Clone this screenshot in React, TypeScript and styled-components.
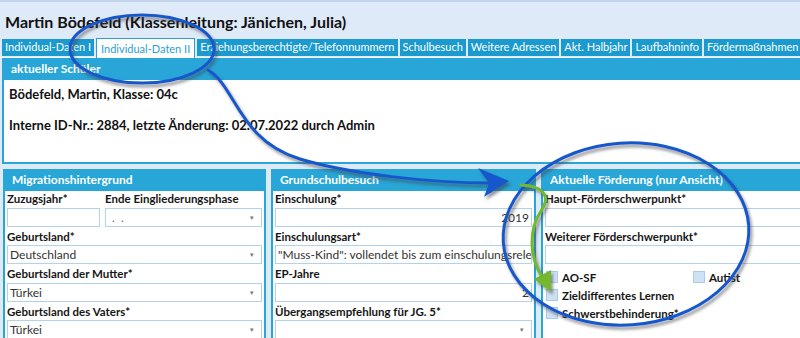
import styled, { createGlobalStyle } from "styled-components";

const FONT = `"Segoe UI", Lato, "Open Sans", sans-serif`;

const GlobalStyle = createGlobalStyle`
  html, body {
    margin: 0;
    padding: 0;
    overflow: hidden;
    background: #dfeaf8;
  }
  * {
    box-sizing: border-box;
  }
`;

const tabs = [
  "Individual-Daten I",
  "Individual-Daten II",
  "Erziehungsberechtigte/Telefonnummern",
  "Schulbesuch",
  "Weitere Adressen",
  "Akt. Halbjahr",
  "Laufbahninfo",
  "Fördermaßnahmen",
  "Einwilligungen",
];

function App() {
  return (
    <Page>
      <GlobalStyle />
      <TitleBar>Martin Bödefeld (Klassenleitung: Jänichen, Julia)</TitleBar>
      <TabStrip>
        {tabs.map((t, i) => (
          <Tab key={t} $active={i === 1}>
            {t}
          </Tab>
        ))}
      </TabStrip>
      <Content>
        <StudentPanel>
          <PanelHeader>aktueller Schüler</PanelHeader>
          <StudentBody>
            <StudentLine>Bödefeld, Martin, Klasse: 04c</StudentLine>
            <StudentLine>Interne ID-Nr.: 2884, letzte Änderung: 02.07.2022 durch Admin</StudentLine>
          </StudentBody>
        </StudentPanel>

        <PanelGrid>
          <Panel>
            <PanelHeader>Migrationshintergrund</PanelHeader>
            <PanelBody>
              <FieldRow>
                <Field $width={93}>
                  <Label>Zuzugsjahr*</Label>
                  <Input />
                </Field>
                <Field $grow>
                  <Label>Ende Eingliederungsphase</Label>
                  <Select>
                    <Placeholder>.&nbsp;&nbsp;.</Placeholder>
                    <Arrow>▾</Arrow>
                  </Select>
                </Field>
              </FieldRow>
              <Field>
                <Label>Geburtsland*</Label>
                <Select>
                  Deutschland
                  <Arrow>▾</Arrow>
                </Select>
              </Field>
              <Field>
                <Label>Geburtsland der Mutter*</Label>
                <Select>
                  Türkei
                  <Arrow>▾</Arrow>
                </Select>
              </Field>
              <Field>
                <Label>Geburtsland des Vaters*</Label>
                <Select>
                  Türkei
                  <Arrow>▾</Arrow>
                </Select>
              </Field>
            </PanelBody>
          </Panel>

          <Panel>
            <PanelHeader>Grundschulbesuch</PanelHeader>
            <PanelBody>
              <Field>
                <Label>Einschulung*</Label>
                <Input $right>2019</Input>
              </Field>
              <Field>
                <Label>Einschulungsart*</Label>
                <Input>"Muss-Kind": vollendet bis zum einschulungsrelevanten Stichtag</Input>
              </Field>
              <Field>
                <Label>EP-Jahre</Label>
                <Input $right>2</Input>
              </Field>
              <Field>
                <Label>Übergangsempfehlung für JG. 5*</Label>
                <Select>
                  <Arrow>▾</Arrow>
                </Select>
              </Field>
            </PanelBody>
          </Panel>

          <Panel>
            <PanelHeader>Aktuelle Förderung (nur Ansicht)</PanelHeader>
            <PanelBody>
              <Field>
                <Label>Haupt-Förderschwerpunkt*</Label>
                <Input />
              </Field>
              <Field>
                <Label>Weiterer Förderschwerpunkt*</Label>
                <Input />
              </Field>
              <CheckGrid>
                <Check>
                  <Box />
                  AO-SF
                </Check>
                <Check>
                  <Box />
                  Autist
                </Check>
                <Check>
                  <Box />
                  Zieldifferentes Lernen
                </Check>
                <span />
                <Check>
                  <Box />
                  Schwerstbehinderung*
                </Check>
              </CheckGrid>
            </PanelBody>
          </Panel>
        </PanelGrid>
      </Content>

      <Annotations viewBox="0 0 800 338" width="800" height="338">
        <defs>
          <filter id="shade" x="-20%" y="-20%" width="140%" height="140%">
            <feDropShadow dx="2" dy="3" stdDeviation="1.6" floodColor="#404040" floodOpacity="0.55" />
          </filter>
        </defs>
        <g filter="url(#shade)" fill="none" strokeLinecap="round">
          <ellipse cx="142" cy="47" rx="72" ry="34" stroke="#1858cc" strokeWidth="3" />
          <path
            d="M208 68 C236 84 238 138 300 157 C350 172 430 181 490 181"
            stroke="#1858cc"
            strokeWidth="3"
          />
          <polygon points="509,179 478,166 489,181 484,195" fill="#1858cc" />
          <ellipse cx="626" cy="232" rx="123" ry="91" transform="rotate(-4 626 232)" stroke="#1858cc" strokeWidth="3" />
          <path
            d="M521 183 C542 184 552 193 541 209 C528 228 530 255 541 273"
            stroke="#74b72e"
            strokeWidth="3"
          />
          <polygon points="551,290 534,277 551,268" fill="#74b72e" />
        </g>
      </Annotations>
    </Page>
  );
}

const Page = styled.div`
  position: relative;
  width: 800px;
  height: 338px;
  overflow: hidden;
  background: #dfeaf8;
  border-top: 2px solid #c3d5ec;
  font-family: ${FONT};
`;

const TitleBar = styled.div`
  height: 35px;
  padding: 10px 0 0 5px;
  font-size: 16px;
  font-weight: 700;
  color: #111;
  white-space: nowrap;
`;

const TabStrip = styled.div`
  display: flex;
  align-items: flex-end;
  gap: 2px;
  padding: 0 2px;
  height: 21px;
  border-bottom: 1px solid #f4f8fd;
  white-space: nowrap;
`;

const Tab = styled.div<{ $active?: boolean }>`
  flex: none;
  height: ${(p) => (p.$active ? "20px" : "17px")};
  padding: ${(p) => (p.$active ? "2px 4px 0" : "0 3px")};
  line-height: 16px;
  font-size: 11px;
  color: ${(p) => (p.$active ? "#2aa0d6" : "#fff")};
  background: ${(p) => (p.$active ? "#fff" : "#1b9acf")};
  border: ${(p) => (p.$active ? "1px solid #2aa0d6" : "none")};
  border-bottom: none;
  margin-bottom: ${(p) => (p.$active ? "-1px" : "1px")};
`;

const Content = styled.div`
  padding: 0 0 0 2px;
`;

const PanelHeader = styled.div`
  height: 22px;
  padding: 3px 0 0 7px;
  background: #27a6d7;
  color: #fff;
  font-size: 12px;
  font-weight: 700;
  white-space: nowrap;
`;

const StudentPanel = styled.div`
  width: 810px;
  height: 106px;
  display: flex;
  flex-direction: column;
  border: 2px solid #27a6d7;
  border-top: none;
  background: #fff;
`;

const StudentBody = styled.div`
  flex: 1;
  display: flex;
  flex-direction: column;
  gap: 15px;
  padding: 6px 0 0 5px;
`;

const StudentLine = styled.div`
  font-size: 13px;
  font-weight: 700;
  color: #111;
  white-space: nowrap;
`;

const PanelGrid = styled.div`
  display: grid;
  grid-template-columns: 263px 265px 300px;
  gap: 5px;
  margin-top: 5px;
  padding-left: 1px;
`;

const Panel = styled.div`
  height: 180px;
  border: 2px solid #27a6d7;
  border-top: none;
  background: #fff;
`;

const PanelBody = styled.div`
  display: flex;
  flex-direction: column;
  padding: 0 2px;
  margin-top: -2px;
`;

const FieldRow = styled.div`
  display: flex;
  gap: 5px;
`;

const Field = styled.div<{ $width?: number; $grow?: boolean }>`
  display: flex;
  flex-direction: column;
  width: ${(p) => (p.$width ? `${p.$width}px` : "auto")};
  flex: ${(p) => (p.$grow ? 1 : "none")};
  min-width: 0;
`;

const Label = styled.div`
  height: 18.5px;
  padding-top: 3px;
  font-size: 11.5px;
  font-weight: 700;
  color: #161616;
  white-space: nowrap;
`;

const Input = styled.div<{ $right?: boolean }>`
  height: 19px;
  padding: 0 2px;
  border: 1px solid #b2d3ee;
  font-size: 12px;
  line-height: 17px;
  color: #333;
  text-align: ${(p) => (p.$right ? "right" : "left")};
  white-space: nowrap;
  overflow: hidden;
`;

const Select = styled(Input)`
  position: relative;
  padding-right: 14px;
`;

const Arrow = styled.span`
  position: absolute;
  right: 7px;
  top: 0;
  font-size: 7px;
  color: #777;
`;

const Placeholder = styled.span`
  padding-left: 4px;
  color: #666;
`;

const CheckGrid = styled.div`
  display: grid;
  grid-template-columns: 147px 1fr;
  row-gap: 6px;
  margin-top: 7px;
  padding-left: 1px;
`;

const Check = styled.label`
  display: flex;
  align-items: center;
  gap: 4px;
  height: 12px;
  font-size: 11.5px;
  font-weight: 700;
  color: #161616;
  white-space: nowrap;
`;

const Box = styled.span`
  width: 12px;
  height: 12px;
  background: #cfe2f4;
  border: 1px solid #a8cbea;
`;

const Annotations = styled.svg`
  position: absolute;
  top: 0;
  left: 0;
  pointer-events: none;
`;

export default App;
